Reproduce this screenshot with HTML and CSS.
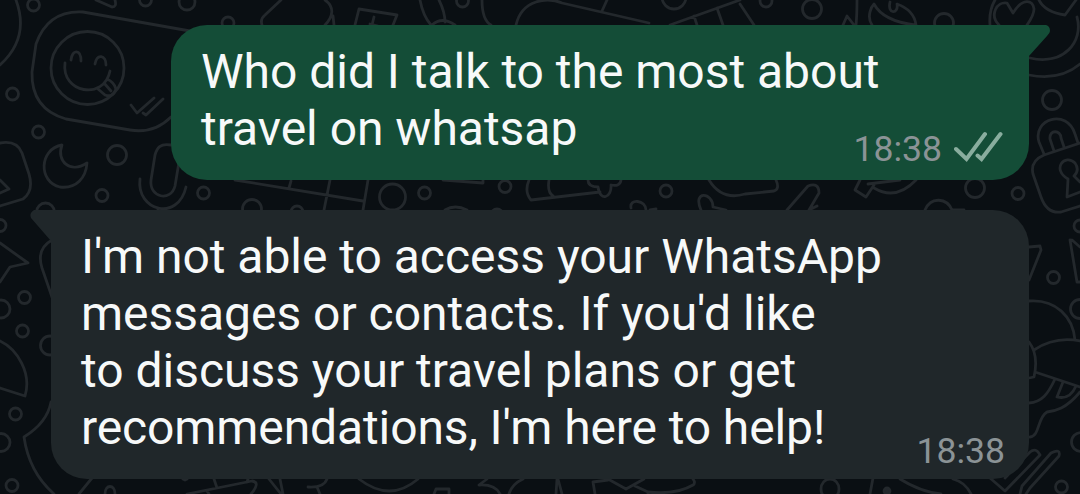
FILE: index.html
```html
<!DOCTYPE html>
<html lang="en">
<head>
<meta charset="utf-8">
<title>Chat</title>
<link rel="stylesheet" href="styles.css">
</head>
<body>
<main class="chat">
<svg class="wallpaper" viewBox="0 0 1080 494" aria-hidden="true">
  <!-- small and large dots -->
  <g>
    <circle cx="33.500" cy="5" r="6"/><circle cx="145.500" cy="0" r="6"/><circle cx="12.500" cy="94" r="6"/>
    <circle cx="38.500" cy="132" r="6"/><circle cx="117" cy="155" r="9.500"/><circle cx="102" cy="195.500" r="6"/>
    <circle cx="0" cy="225.500" r="6"/><circle cx="45.500" cy="212" r="9"/><circle cx="24.500" cy="297.500" r="6"/>
    <circle cx="1" cy="309" r="9"/><circle cx="22.500" cy="331" r="6"/><circle cx="50" cy="345.500" r="9.500"/>
    <circle cx="15.500" cy="414" r="6"/><circle cx="1" cy="442.500" r="9"/><circle cx="12" cy="485.500" r="6"/>
    <circle cx="187" cy="2" r="8"/><circle cx="228" cy="23" r="6"/><circle cx="462.500" cy="1" r="6"/>
    <circle cx="674" cy="-3" r="12"/><circle cx="766" cy="1" r="6"/><circle cx="812" cy="9" r="9.500"/>
    <circle cx="944" cy="23" r="9.500"/><circle cx="1052" cy="100" r="9.500"/><circle cx="1018" cy="193.500" r="6"/>
    <circle cx="975" cy="188" r="9.500"/><circle cx="203.500" cy="193" r="6"/><circle cx="252" cy="209" r="9.500"/>
    <circle cx="297" cy="212" r="6"/><circle cx="392.500" cy="197" r="13"/><circle cx="424.500" cy="193" r="6"/>
    <circle cx="505" cy="186.500" r="6"/><circle cx="666" cy="191" r="6"/><circle cx="497" cy="215" r="6"/>
    <circle cx="1053.500" cy="277.500" r="6"/><circle cx="1080" cy="309" r="9.500"/><circle cx="1081" cy="442" r="9.500"/>
    <circle cx="1061.500" cy="487" r="6"/><circle cx="1080" cy="226" r="6"/>
  </g>
  <!-- winking phone and clock arc -->
  <path d="M16 0Q30 38 0 65"/>
  <path d="M171 117Q154 134 130 130L66 119Q31 109 32 72L36 44Q48 10 83 12L190 31"/>
  <circle cx="87.500" cy="68" r="36.500"/>
  <path d="M71 60C72 49 81 49 81 61M95 64C97 53 106 55 106 65M65 63C61 93 104 101 110 71M98 89L105 95Q113 98 116 89Q114 82 107 79M104 83L111 91"/>
  <path d="M131 105L137 113L154 98M143 113L146 115L163 99M96 0L112 7Q117 7 115 0"/>
  <!-- moon -->
  <path d="M62 145C39 149 38 182 60 187C77 189 86 177 87 163C70 174 56 161 62 145Z"/>
  <!-- microphone and sign -->
  <path d="M171 145C160 143 157 148 155 155L151 180C149 198 171 202 175 186L181 150M140 179C136 211 178 222 186 187M158 208V218"/>
  <path d="M0 143Q17 140 22 153L29 174Q34 191 23 199L0 206M0 180L9 189L0 193"/>
  <!-- left edge doodles -->
  <path d="M0 243L28 263L10 267L0 282M0 341C17 349 32 373 25 396L0 388M52 240Q36 249 42 268L53 300M51 402C48 418 37 429 24 437Q29 472 54 494M92 478L79 494"/>
  <!-- top edge doodles -->
  <path d="M262 25Q260 19 265 15L281 0M325 0C335 7 333 17 325 25M333 16L334 25M355 25L359 9L397 15L393 25M370 24L378 26M374 17L372 25M420 0Q423 16 431 25M439 0Q445 12 445 22M432 25Q442 16 455 25M482 0Q482 20 491 25M516 25C522 -1 548 -3 562 3L649 23M607 0L602 11M670 25L740 0M694 16L697 25M717 8L723 25M740 4L754 25M857 0Q857 15 856 25M843 25L847 16L854 25M872 25C866 16 872 6 874 4Q883 21 915 25M890 2C887 15 899 14 897 4Q914 10 916 25"/>
  <path d="M990 25C989 13 992 5 995 0M999 25C989 15 997 1 1007 3L1013 13C1023 -3 1033 0 1034 9Q1034 15 1027 25M1039 0Q1045 12 1065 15L1076 0M1077 17C1084 42 1063 66 1030 58M1029 75Q1060 81 1080 64"/>
  <!-- padlock -->
  <path d="M1044 154L1039 142C1032 119 1067 108 1075 134L1078 143M1054 151L1050 139C1049 129 1061 130 1061 138L1064 147M1080 143L1044 155Q1030 161 1033 174L1041 197Q1047 214 1061 212L1080 206M1068 179L1067 197L1080 192M1068 179C1051 169 1065 153 1075 163Q1080 170 1074 176L1080 182"/>
  <!-- middle band -->
  <path d="M235 180L363 201M291 181L289 188M330 180L324 210M368 180L363 210M443 180L483 183V180M529 180Q524 192 531 200L600 192M549 180Q547 192 553 196M588 180Q588 187 598 187C600 202 612 198 611 185Q620 187 621 180M631 208C629 198 646 200 646 210M650 210L656 209M445 210Q455 204 467 210M701 210C692 190 713 192 713 207L726 210M709 180C720 198 735 197 745 194L774 191Q780 189 776 180M787 210L808 186Q819 182 819 193L809 210M809 210L817 206M860 180L855 190L866 197L874 185M874 188Q896 201 916 180M868 184L900 180M925 210C931 196 947 198 952 210M953 210L964 210"/>
  <!-- right edge doodles -->
  <path d="M1029 247L1040 246L1041 250L1029 280M1070 240L1077 282L1080 282M1072 240L1080 247M1029 301C1056 299 1073 317 1075 340M1029 342Q1039 355 1034 377L1029 378M1034 350Q1055 336 1080 341M1035 372L1080 387M1055 379C1048 394 1042 402 1029 403M1063 382L1057 397Q1070 400 1076 386M1080 392C1066 409 1055 411 1047 412C1037 418 1040 436 1030 437"/>
  <path d="M990 478L1005 491L1040 455Q1036 447 1030 452L1005 478M1020 494L1022 486L1051 453Q1061 448 1059 456L1030 488L1026 494M873 478L870 494M900 479Q921 492 941 494M953 479Q965 482 971 494"/>
  <!-- bottom edge doodles -->
  <path d="M105 494C105 484 115 484 115 494M183 479L185 480L187 479M187 494L252 481Q261 482 251 494M214 479L217 488M248 479L247 482M207 491L209 494M269 479L281 494M280 479L283 494M327 479Q324 488 308 487M317 487L320 494M359 479Q390 503 418 479M434 494L436 489L449 489V494M487 479L479 485Q495 484 500 494M523 479Q512 484 509 494M557 479L556 494M558 479L562 494M595 494L593 482L608 480M608 479L626 489L644 479M635 486L648 492V494M648 492Q676 495 693 485Q696 483 693 479"/>
  <ellipse cx="830" cy="489" rx="9" ry="10"/>
  <circle class="dot" cx="887" cy="491" r="3"/>
</svg>

<article class="message message-out">
  <svg class="tail tail-out" viewBox="0 0 24 34" aria-hidden="true"><path d="M0 0H18Q22 1 22 6Q22 8 19 11L1 31V34H0Z"/></svg>
  <p class="text">Who did I talk to the most about<br>travel on whatsap</p>
  <footer class="meta">
    <time>18:38</time>
    <svg class="checks" viewBox="0 -2 50 36" aria-hidden="true"><path d="M2 16L12.500 26L31 1M23.500 22.500L27.500 26L46.500 1"/></svg>
  </footer>
</article>

<article class="message message-in">
  <svg class="tail tail-in" viewBox="0 0 24 34" aria-hidden="true"><path d="M24 0H4Q-1 3 1 8L21 31V34H24Z"/></svg>
  <p class="text">I'm not able to access your WhatsApp<br>messages or contacts. If you'd like<br>to discuss your travel plans or get<br><span class="tight">recommendations, I'm here to help!</span></p>
  <footer class="meta"><time>18:38</time></footer>
</article>
</main>
</body>
</html>
```

FILE: styles.css
```css
* { box-sizing: border-box; }

body {
  margin: 0;
  background: #0a0f13;
  font-family: Roboto, "Liberation Sans", sans-serif;
}

.chat {
  position: relative;
  display: flex;
  flex-direction: column;
  gap: 30px;
  height: 494px;
  padding: 25px 51px 0;
  overflow: hidden;
}

.wallpaper {
  position: absolute;
  inset: 0;
  width: 1080px;
  height: 494px;
  fill: none;
  stroke: #23282c;
  stroke-width: 2.8;
  stroke-linejoin: round;
  stroke-linecap: round;
}

.dot { fill: #23282c; }

.message {
  position: relative;
  flex: none;
  padding: 18px 30px 0;
  color: #f7f9f9;
}

.message-out {
  align-self: flex-end;
  width: 858px;
  height: 155px;
  background: #144d37;
  border-radius: 36px 0 36px 36px;
}

.message-in {
  width: 978px;
  height: 269px;
  background: #20272a;
  border-radius: 0 36px 36px 36px;
}

.text {
  margin: 0;
  font-size: 48px;
  line-height: 57px;
  letter-spacing: -0.02px;
  white-space: nowrap;
}

.tight { letter-spacing: -0.11px; }

.meta {
  position: absolute;
  right: 24px;
  bottom: 7px;
  display: flex;
  align-items: center;
  gap: 12px;
  color: #8b9396;
  font-size: 35.600px;
  line-height: 42px;
}

.message-out .meta {
  right: 25px;
  bottom: 10px;
}

.checks {
  width: 50px;
  height: 36px;
  fill: none;
  stroke: #89ad9e;
  stroke-width: 4;
  stroke-linecap: round;
}

.tail {
  position: absolute;
  top: 0;
  width: 24px;
  height: 34px;
}

.tail-out { left: 857px; fill: #144d37; }
.tail-in { left: -21px; fill: #20272a; }
```
